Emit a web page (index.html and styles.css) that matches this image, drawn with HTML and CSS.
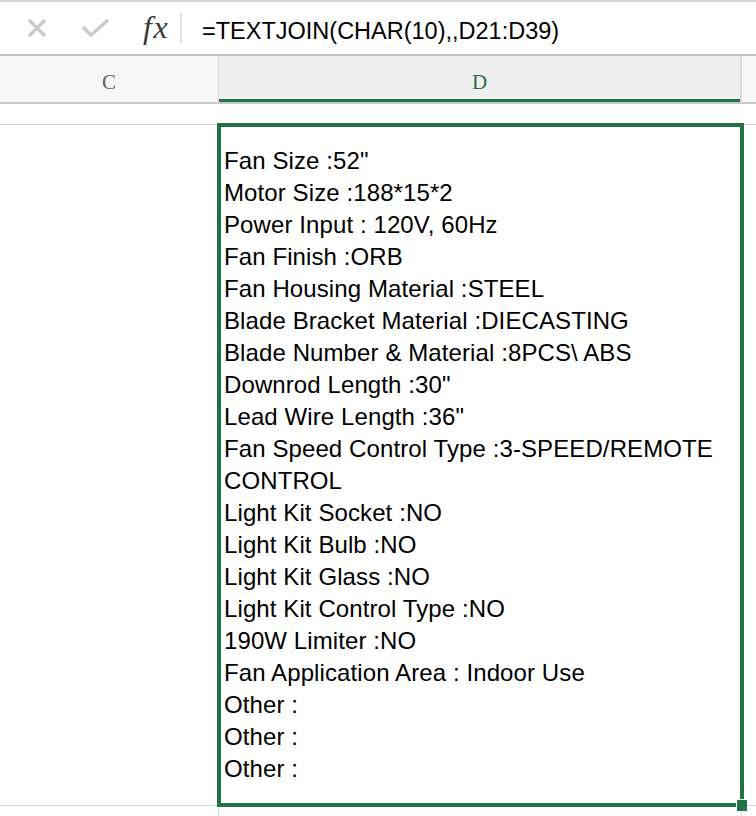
FILE: index.html
```html
<!DOCTYPE html>
<html>
<head>
<meta charset="utf-8">
<link rel="stylesheet" href="styles.css">
</head>
<body>
<div class="formula-bar">
  <div class="fb-icons">
    <svg class="ic ic-x" width="22" height="22" viewBox="0 0 22 22"><path d="M3 3 L19 19 M19 3 L3 19" stroke="#c9c9c9" stroke-width="3.2" fill="none"/></svg>
    <svg class="ic ic-check" width="30" height="22" viewBox="0 0 30 22"><path d="M2 10 L10 18 L27 3" stroke="#c9c9c9" stroke-width="3.2" fill="none"/></svg>
    <span class="fx">fx</span>
    <span class="fb-sep"></span>
  </div>
  <div class="fb-input">=TEXTJOIN(CHAR(10),,D21:D39)</div>
</div>
<div class="col-headers">
  <div class="ch ch-c">C</div>
  <div class="ch ch-d">D</div>
  <div class="ch ch-e"></div>
</div>
<div class="row row1">
  <div class="cell c-c"></div>
  <div class="cell c-d"></div>
  <div class="cell c-e"></div>
</div>
<div class="row row2">
  <div class="cell c-c"></div>
  <div class="cell c-d sel">
    <div class="cell-text">Fan Size :52"
Motor Size :188*15*2
Power Input : 120V, 60Hz
Fan Finish :ORB
Fan Housing Material :STEEL
Blade Bracket Material :DIECASTING
Blade Number &amp; Material :8PCS\ ABS
Downrod Length :30"
Lead Wire Length :36"
Fan Speed Control Type :3-SPEED/REMOTE
CONTROL
Light Kit Socket :NO
Light Kit Bulb :NO
Light Kit Glass :NO
Light Kit Control Type :NO
190W Limiter :NO
Fan Application Area : Indoor Use
Other :
Other :
Other :</div>
    <span class="handle"></span>
  </div>
  <div class="cell c-e"></div>
</div>
<div class="row row3">
  <div class="cell c-c vl"></div>
  <div class="cell c-d vl"></div>
  <div class="cell c-e"></div>
</div>
</body>
</html>
```
FILE: styles.css
```css
html, body {
  margin: 0;
  padding: 0;
  background: #ffffff;
  overflow: hidden;
  width: 756px;
  height: 816px;
}

.formula-bar {
  height: 52px;
  border-top: 2px solid #d6d6d6;
  border-bottom: 2px solid #c4c4c4;
  display: flex;
  align-items: center;
  background: #ffffff;
}

.fb-icons {
  display: flex;
  align-items: center;
  height: 100%;
  width: 202px;
  flex: none;
}

.ic-x {
  margin-left: 26px;
}

.ic-check {
  margin-left: 33px;
}

.fx {
  margin-left: 32px;
  font-family: "Liberation Serif", serif;
  font-style: italic;
  font-size: 32px;
  color: #3a3a3a;
  letter-spacing: 1.5px;
  line-height: 1;
  margin-top: -2px;
}

.fb-sep {
  width: 2px;
  height: 30px;
  background: #e2e2e2;
  margin-left: 11px;
}

.fb-input {
  font-family: "Liberation Sans", Arial, sans-serif;
  font-size: 23.5px;
  color: #000;
  padding-top: 6px;
}

.col-headers {
  display: flex;
  height: 46px;
  border-bottom: 2px solid #c8c8c8;
  background: #f6f6f6;
}

.ch {
  display: flex;
  align-items: center;
  justify-content: center;
  font-family: "Liberation Serif", serif;
  font-size: 21px;
  color: #5e5e5e;
  box-sizing: border-box;
}

.ch-c {
  width: 219px;
  border-right: 1px solid #dcdcdc;
  padding-top: 6px;
}

.ch-d {
  width: 523px;
  background: #efefef;
  color: #217346;
  border-right: 2px solid #dadada;
  box-shadow: inset 0 -3px 0 #217346;
  padding-top: 6px;
}

.ch-e {
  flex: 1;
  background: #f8f8f8;
}

.row {
  display: flex;
  border-bottom: 1px solid #d6d6d6;
}

.row1 {
  height: 20px;
}

.row2 {
  height: 680px;
}

.row3 {
  height: 40px;
  border-bottom: none;
}

.cell {
  box-sizing: border-box;
}

.c-c {
  width: 218px;
}

.c-d {
  width: 523px;
  margin-left: 1px;
}

.c-e {
  flex: 1;
}

.vl {
  border-right: 1px solid #d6d6d6;
}

.row3 .c-c {
  width: 219px;
}

.row3 .c-d {
  margin-left: 0;
  width: 523px;
}

.sel {
  position: relative;
  outline: 4px solid #217346;
  outline-offset: -2px;
  z-index: 1;
}

.cell-text {
  white-space: pre;
  font-family: "Liberation Sans", Arial, sans-serif;
  font-size: 24px;
  line-height: 32px;
  color: #000;
  padding-left: 5px;
  padding-top: 20px;
  letter-spacing: 0.1px;
}

.handle {
  position: absolute;
  right: -5px;
  bottom: -6px;
  width: 10px;
  height: 11px;
  background: #217346;
  border-left: 1px solid #fff;
  border-top: 1px solid #fff;
}
```
